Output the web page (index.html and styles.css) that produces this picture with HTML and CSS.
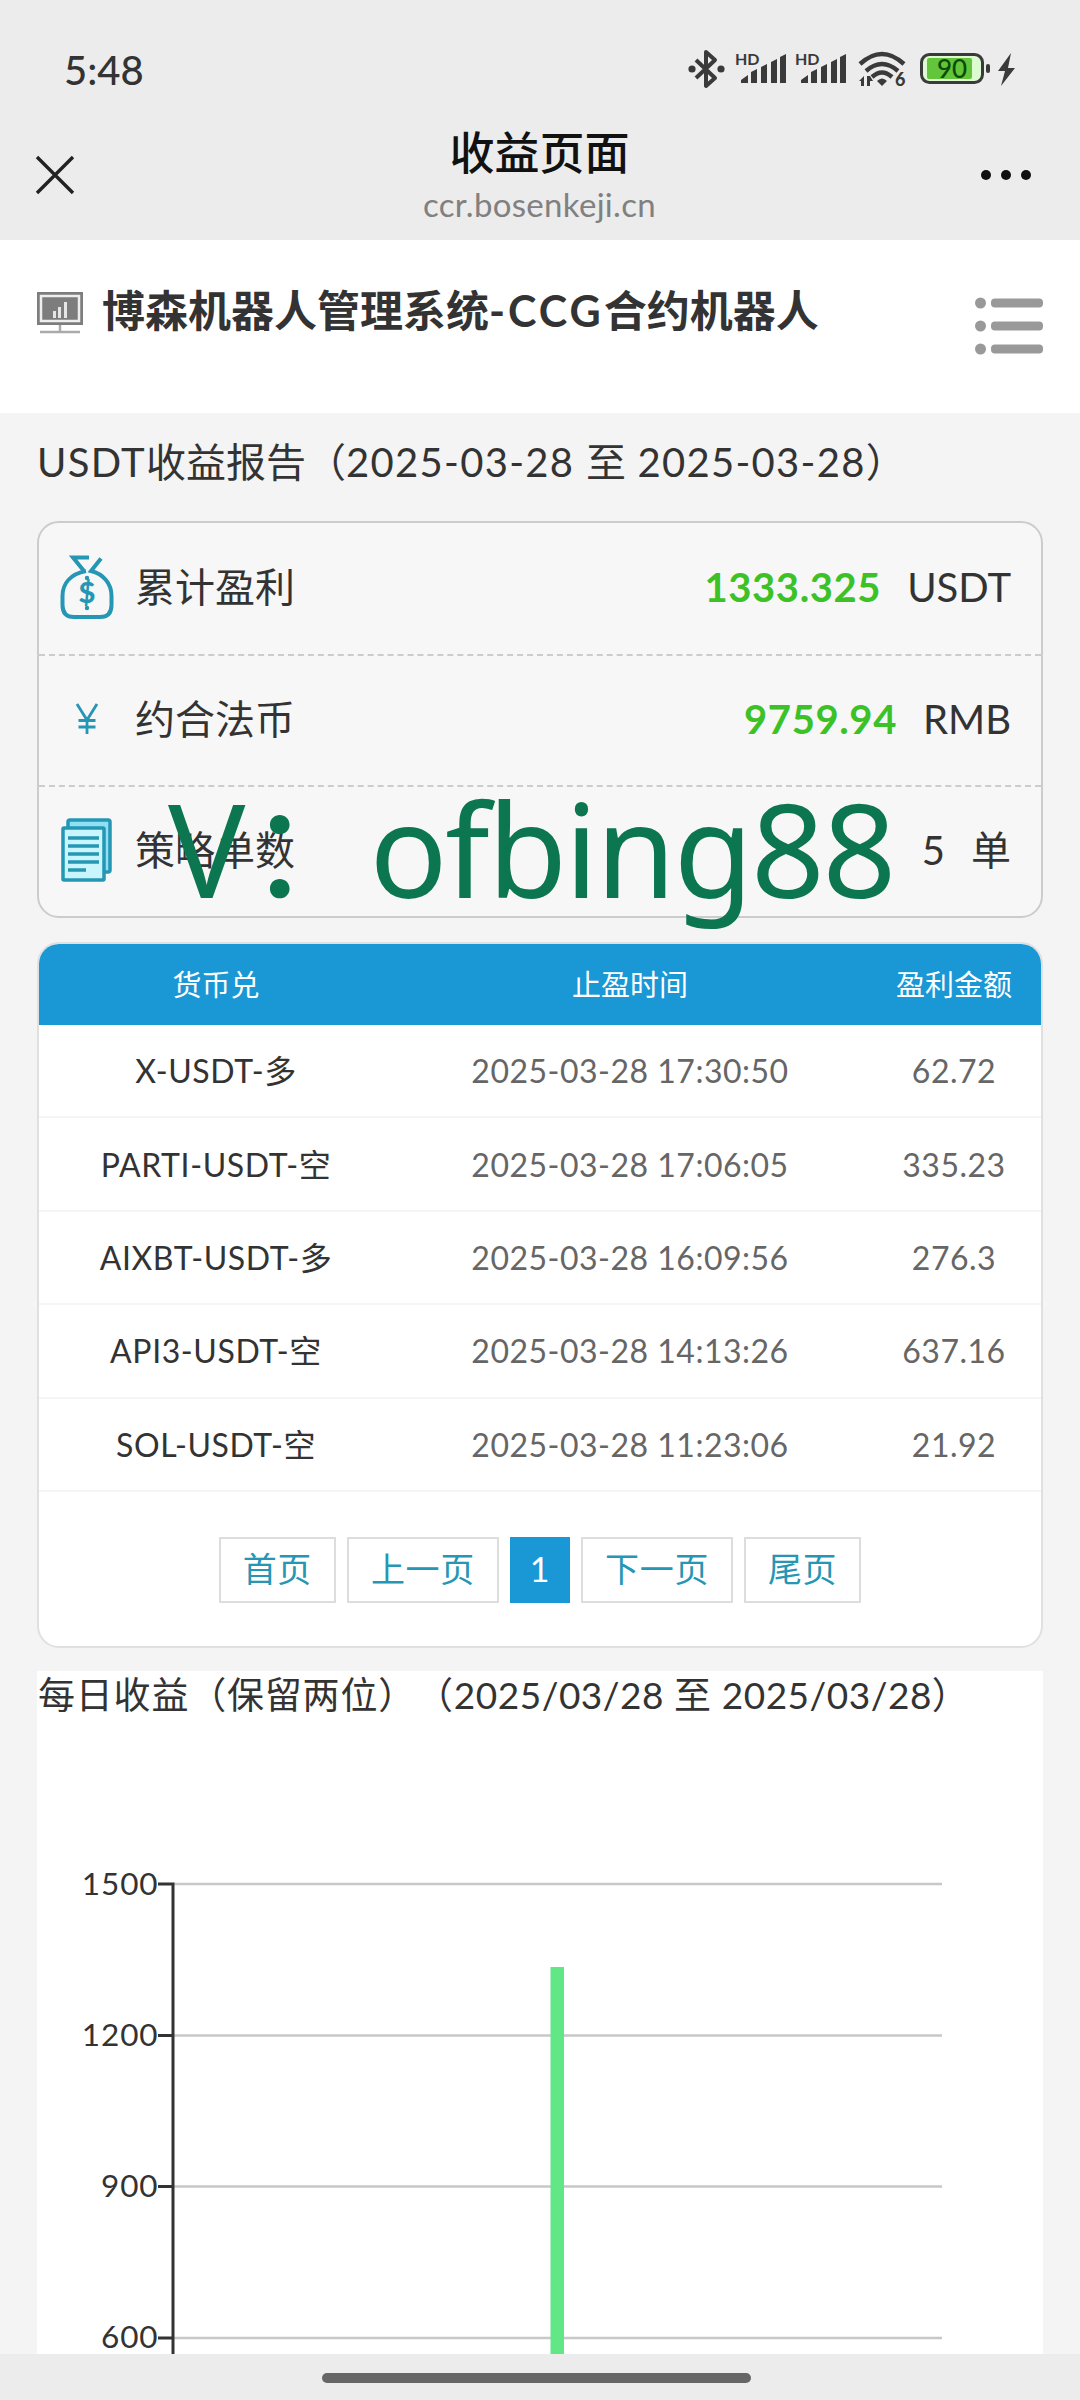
FILE: index.html
```
<!DOCTYPE html>
<html lang="zh-CN">
<head>
  <meta charset="UTF-8" />
  <title>收益页面</title>
  <link rel="stylesheet" href="styles.css">
</head>
<body>
  <header class="top">
    <div class="status">
      <span class="time">5:48</span>
      <svg class="status-icons" viewBox="0 0 332 44" width="332" height="44">
        <!-- bluetooth -->
        <g fill="none" stroke="#3a3a3a" stroke-width="4" stroke-linejoin="round">
          <path d="M8 13 L27 31 L18 39 V5 L27 13 L8 31"/>
        </g>
        <circle cx="4" cy="22" r="3.6" fill="#3a3a3a"/>
        <circle cx="33" cy="22" r="3.6" fill="#3a3a3a"/>
        <!-- sim signals -->
        <g fill="#3a3a3a">
          <text class="hd" x="47" y="18">HD</text>
          <path d="M53 36v-3l7-5v8zM63 36v-11l6-3v14zM73 36v-16l6-3v19zM83 36v-21l6-3v24zM92 36v-26l6-3v29z"/>
          <text class="hd" x="107" y="18">HD</text>
          <path d="M113 36v-3l7-5v8zM123 36v-11l6-3v14zM133 36v-16l6-3v19zM143 36v-21l6-3v24zM152 36v-26l6-3v29z"/>
        </g>
        <!-- wifi -->
        <g fill="none" stroke="#3a3a3a" stroke-width="4.4">
          <path d="M172 17 Q194 -3 216 17"/>
          <path d="M178 24 Q194 10 210 24"/>
          <path d="M184 30 Q194 21 204 30"/>
        </g>
        <g fill="#3a3a3a">
          <path d="M189 34 Q194 29 199 34 L194 39z"/>
          <path d="M171 34l5-5v10h-3v-5zM179 29h3l3 5h-3v5h-3z"/>
          <text class="gen" x="207" y="39">6</text>
        </g>
        <!-- battery -->
        <rect x="233.5" y="7.5" width="61" height="28" rx="8" fill="#dcfbd0" stroke="#3a3a3a" stroke-width="3"/>
        <rect x="239" y="11" width="45" height="21" rx="2" fill="#62c53a"/>
        <rect x="298" y="17" width="4" height="9" rx="2" fill="#3a3a3a"/>
        <text class="level" x="249" y="31">90</text>
        <path d="M323 6l-13 18h7l-4 15 14-18h-7z" fill="#3a3a3a"/>
      </svg>
    </div>
    <div class="nav">
      <svg class="close" viewBox="0 0 40 40" width="40" height="40">
        <path d="M2 2L38 38M38 2L2 38" stroke="#222" stroke-width="3.4" fill="none"/>
      </svg>
      <div class="nav-title">
        <div class="name">收益页面</div>
        <div class="url">ccr.bosenkeji.cn</div>
      </div>
      <div class="more"><i></i><i></i><i></i></div>
    </div>
  </header>

  <section class="brand">
    <svg class="monitor" viewBox="0 0 46 42" width="46" height="42">
      <rect width="46" height="33" fill="#7d7d7d"/>
      <rect x="4" y="4" width="38" height="25" fill="none" stroke="#eee" stroke-width="2.5"/>
      <path d="M16 26v-7h3v7zM21 26v-11h3v11zM27 26v-16h3v16z" fill="#e6e6e6"/>
      <path d="M23 33v6M3 40h40" stroke="#aaa" stroke-width="2.5"/>
    </svg>
    <h1>博森机器人管理系统<span class="latin">-CCG</span>合约机器人</h1>
    <svg class="menu" viewBox="0 0 70 60" width="70" height="60">
      <g fill="#999">
        <circle cx="6.5" cy="7" r="5.5"/><circle cx="6.5" cy="30" r="5.5"/><circle cx="6.5" cy="53" r="5.5"/>
        <rect x="17" y="2.5" width="52" height="9" rx="4"/><rect x="17" y="25.5" width="52" height="9" rx="4"/><rect x="17" y="48.5" width="52" height="9" rx="4"/>
      </g>
    </svg>
  </section>

  <main>
    <h2><span class="latin">USDT</span>收益报告（<span class="latin">2025-03-28 </span>至<span class="latin"> 2025-03-28</span>）</h2>

    <section class="summary">
      <div class="line">
        <svg class="icon" viewBox="0 0 54 66" width="54" height="66">
          <g fill="none" stroke="#2596b4" stroke-width="4">
            <path d="M24 17 L13 3.5 H29 M41 4.5 L31 17 C43 20 51.5 29 51.5 42 V51 Q51.5 63 40 63 H14 Q2.5 63 2.5 51 V42 C2.5 29 11 20 26 17"/>
          </g>
          <text class="dollar" x="27" y="49">$</text>
          <circle cx="27" cy="24" r="2.2" fill="#2596b4"/><circle cx="27" cy="54" r="2.2" fill="#2596b4"/>
        </svg>
        <span class="label">累计盈利</span>
        <b>1333.325</b><span class="unit">USDT</span>
      </div>
      <div class="line">
        <svg class="icon" viewBox="0 0 54 66" width="54" height="66">
          <path d="M17 18L27 34L37 18M27 34V48M18.5 34.5H35.5M18.5 41H35.5" fill="none" stroke="#2596b4" stroke-width="2.8"/>
        </svg>
        <span class="label">约合法币</span>
        <b>9759.94</b><span class="unit">RMB</span>
      </div>
      <div class="line">
        <svg class="icon" viewBox="0 0 54 66" width="54" height="66">
          <g fill="#8fe0f5" stroke="#2596b4" stroke-width="3.5">
            <rect x="8" y="3" width="42" height="52" rx="2"/>
            <rect x="3" y="11" width="41" height="52" rx="1" fill="#c9f5ff"/>
            <path d="M8 21H39M8 29H39M8 37H39M8 45H39M8 53H26"/>
          </g>
        </svg>
        <span class="label">策略单数</span>
        <span>5</span><span class="unit cjk">单</span>
      </div>
      <div class="mark"><span class="v">V</span>：<span class="id">ofbing88</span></div>
    </section>

    <section class="orders">
      <div class="row head"><span>货币兑</span><span>止盈时间</span><span>盈利金额</span></div>
      <div class="row"><span>X-USDT-多</span><span>2025-03-28 17:30:50</span><span>62.72</span></div>
      <div class="row"><span>PARTI-USDT-空</span><span>2025-03-28 17:06:05</span><span>335.23</span></div>
      <div class="row"><span>AIXBT-USDT-多</span><span>2025-03-28 16:09:56</span><span>276.3</span></div>
      <div class="row"><span>API3-USDT-空</span><span>2025-03-28 14:13:26</span><span>637.16</span></div>
      <div class="row"><span>SOL-USDT-空</span><span>2025-03-28 11:23:06</span><span>21.92</span></div>
      <div class="pager">
        <a>首页</a><a>上一页</a><a class="current">1</a><a>下一页</a><a>尾页</a>
      </div>
    </section>

    <section class="daily">
      <h3>每日收益（保留两位）（<span class="latin">2025/03/28 </span>至<span class="latin"> 2025/03/28</span>）</h3>
      <svg class="chart" viewBox="0 0 1006 620" width="1006" height="620">
        <g stroke="#c8c8c8" stroke-width="2.5">
          <path d="M136 150H905M136 301.5H905M136 452.5H905M136 604H905"/>
        </g>
        <g stroke="#333" stroke-width="3">
          <path d="M136 148.5V620M121 150H136M121 301.5H136M121 452.5H136M121 604H136"/>
        </g>
        <rect x="513.5" y="233" width="13.5" height="387" fill="#61e786"/>
        <g class="ticks">
          <text x="121.5" y="161">1500</text>
          <text x="121.5" y="312">1200</text>
          <text x="121.5" y="463">900</text>
          <text x="121.5" y="614">600</text>
        </g>
      </svg>
    </section>
  </main>

  <footer class="gesture"><i></i></footer>
</body>
</html>
```
FILE: styles.css
```
* { box-sizing: border-box; }
body {
  margin: 0;
  width: 1080px;
  height: 2400px;
  overflow: hidden;
  display: flex;
  flex-direction: column;
  background: #f4f4f4;
  color: #333;
  font-family: Lato, "Noto Sans CJK SC", sans-serif;
}
h1, h2, h3 { margin: 0; font-weight: 400; white-space: pre; }

.top { flex: none; height: 240px; background: #ececec; }
.status {
  display: flex;
  justify-content: space-between;
  align-items: center;
  height: 110px;
  padding: 30px 60px 0 64px;
}
.time { font-size: 40px; font-weight: 500; }
.status-icons { margin-bottom: 2px; }
.hd { font: 700 16px Lato, sans-serif; }
.gen { font: 900 18px Lato, sans-serif; }
.level { font: 500 26px Lato, sans-serif; fill: #0d4a08; }
.nav {
  display: grid;
  grid-template-columns: 1fr auto 1fr;
  align-items: center;
  height: 130px;
  padding: 0 49px 0 35px;
}
.nav-title { padding: 3px 0 0 13px; text-align: center; }
.name { font-size: 45px; line-height: 54px; font-weight: 500; color: #111; }
.url { font-size: 33px; line-height: 48px; letter-spacing: 0.3px; color: #808080; }
.more { display: flex; justify-content: flex-end; gap: 10px; }
.more i { width: 10px; height: 10px; border-radius: 50%; background: #111; }

.brand {
  display: flex;
  flex: none;
  height: 173px;
  padding: 40px 36px 0 37px;
  background: #fff;
}
.monitor { margin-top: 12px; }
.brand h1 {
  flex: 1;
  margin-left: 19px;
  font-size: 43px;
  line-height: 62px;
  font-weight: 700;
}
h1 .latin { letter-spacing: 3px; }
.menu { margin-top: 16px; }

main { flex: none; height: 1941px; padding: 0 37px; }
h2 { height: 108px; font-size: 40px; line-height: 98px; }
h2 .latin { letter-spacing: 1.3px; }

.summary {
  position: relative;
  border: 2px solid #ccc;
  border-radius: 22px;
  background: #f7f7f8;
}
.line {
  display: flex;
  align-items: center;
  height: 131px;
  padding: 0 30px 3px 21px;
  font-size: 40px;
}
.line + .line { border-top: 2px dashed #ccc; }
.label { flex: 1; margin: 0 0 5px 21px; }
.line b { color: #3cc127; letter-spacing: 0.6px; }
.unit { margin-left: 26px; }
.unit.cjk { margin-bottom: 4px; }
/* contact text laid over the card */
.mark {
  position: absolute;
  left: 129px;
  top: 261px;
  white-space: pre;
  font-family: "Noto Sans", "Noto Sans CJK SC", sans-serif;
  font-size: 129px;
  line-height: 129px;
  color: #0b7650;
}
.mark .v { letter-spacing: 2px; }
.mark .id { margin-left: -7px; letter-spacing: -2.1px; }
.dollar { font: 900 29px Lato, sans-serif; fill: #2596b4; text-anchor: middle; }

.orders {
  margin-top: 24px;
  height: 706px;
  border: 2px solid #e0e0e0;
  border-radius: 22px;
  background: #fff;
  overflow: hidden;
}
.row {
  display: grid;
  grid-template-columns: 354px 474px 1fr;
  height: 93.4px;
  align-items: center;
  text-align: center;
  border-bottom: 2px solid #f5f5f5;
  font-size: 32px;
  letter-spacing: 0.5px;
  color: #666;
}
.row span:first-child { padding-bottom: 3px; letter-spacing: 0.6px; color: #333; }
.head { height: 81px; border: 0; background: #1a97d5; font-size: 29px; letter-spacing: 0; }
.row.head span { padding-bottom: 3px; letter-spacing: 0; color: #fff; }
.pager { display: flex; justify-content: center; gap: 10.8px; padding-top: 45px; }
.pager a {
  height: 66px;
  padding: 0 22px;
  border: 2px solid #ddd;
  font-size: 34px;
  line-height: 60px;
  letter-spacing: 0.7px;
  color: #2596b4;
}
.pager .current {
  padding: 0 18px;
  background: #1a97d5;
  border-color: #1a97d5;
  color: #fff;
}

.daily { margin-top: 23px; height: 683px; background: #fff; overflow: hidden; }
h3 {
  height: 63px;
  padding-left: 1px;
  font-size: 37px;
  line-height: 48px;
  letter-spacing: 0.8px;
  text-spacing-trim: space-all;
}
h3 .latin { letter-spacing: 0.5px; }
.chart { display: block; }
.ticks { font: 31.5px Lato, sans-serif; letter-spacing: 0.9px; text-anchor: end; fill: #333; }

.gesture {
  display: flex;
  flex: none;
  justify-content: center;
  height: 46px;
  padding: 19px 8px 0 0;
  background: #ececec;
}
.gesture i { width: 429px; height: 10px; border-radius: 5px; background: #666; }
```
